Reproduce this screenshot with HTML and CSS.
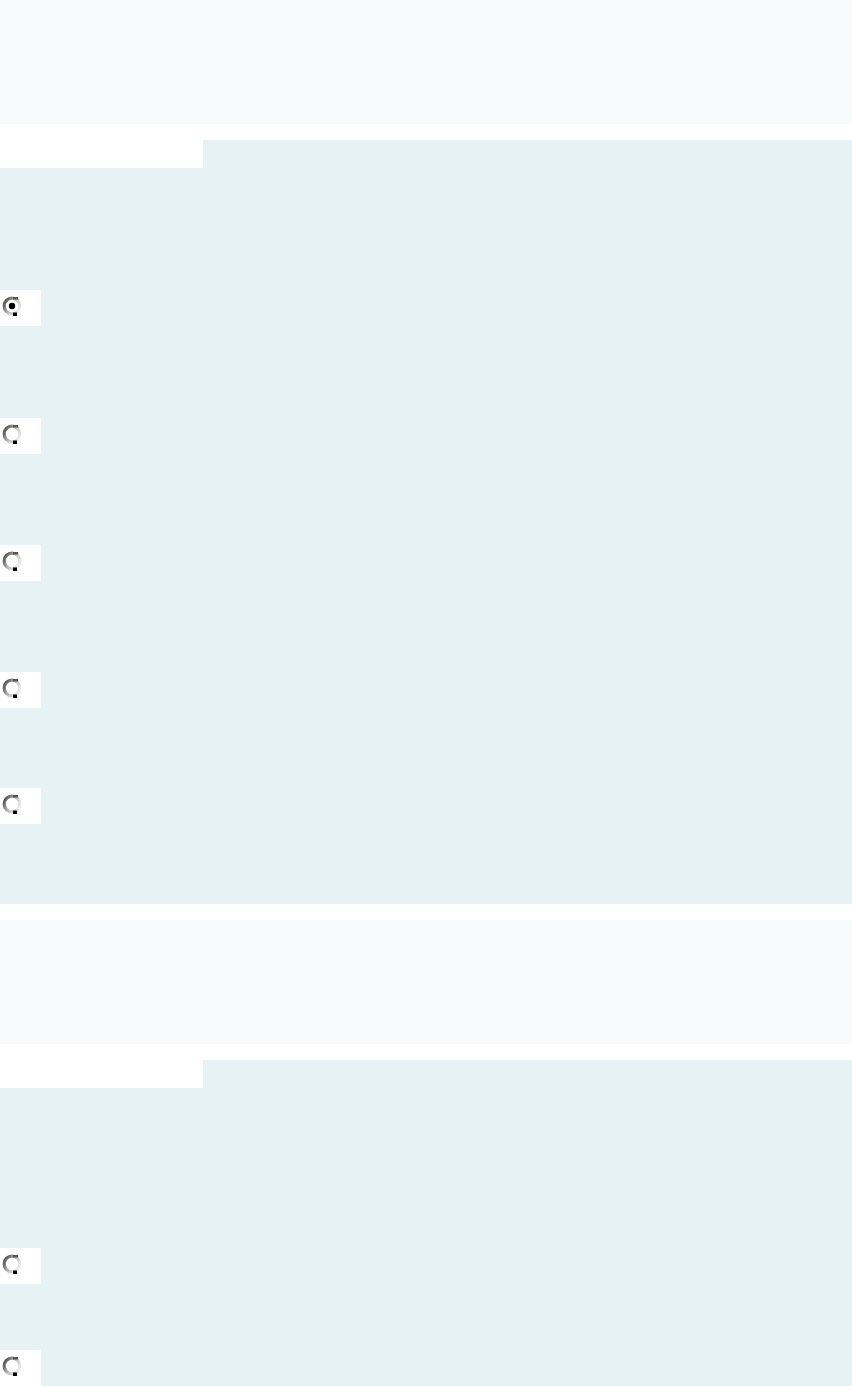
FILE: index.html
```html
<!DOCTYPE html>
<html lang="en">
<head>
    <title>Quiz</title>
    <link rel="stylesheet" href="styles.css">
</head>
<body>
    <svg class="defs" width="0" height="0">
        <defs>
            <linearGradient id="ring" x1="0" y1="0.2" x2="1" y2="0.8">
                <stop offset="0" stop-color="#4f4f4f"/>
                <stop offset="0.5" stop-color="#bdbdbd"/>
                <stop offset="1" stop-color="#f2f2f2"/>
            </linearGradient>
        </defs>
    </svg>

    <div class="question">
        <div class="q-head"></div>
        <div class="q-tabs">
            <div class="tab-blank"></div>
            <div class="tab-fill"></div>
        </div>
        <div class="q-options">
            <div class="option first">
                <label class="radio-box">
                    <svg class="radio" viewBox="0 0 20 20" width="20" height="20">
                        <circle cx="10" cy="10" r="7.8" fill="#fff" stroke="url(#ring)" stroke-width="3.2"/>
                        <rect x="11" y="1" width="5" height="2.5" fill="#555"/>
                        <rect x="11" y="16.5" width="4" height="3.5" fill="#000"/>
                        <circle cx="10" cy="10" r="3.2" fill="#000"/>
                    </svg>
                </label>
            </div>
            <div class="option gap-92">
                <label class="radio-box">
                    <svg class="radio" viewBox="0 0 20 20" width="20" height="20">
                        <circle cx="10" cy="10" r="7.8" fill="#fff" stroke="url(#ring)" stroke-width="3.2"/>
                        <rect x="11" y="1" width="5" height="2.5" fill="#555"/>
                        <rect x="11" y="16.5" width="4" height="3.5" fill="#000"/>
                    </svg>
                </label>
            </div>
            <div class="option gap-91">
                <label class="radio-box">
                    <svg class="radio" viewBox="0 0 20 20" width="20" height="20">
                        <circle cx="10" cy="10" r="7.8" fill="#fff" stroke="url(#ring)" stroke-width="3.2"/>
                        <rect x="11" y="1" width="5" height="2.5" fill="#555"/>
                        <rect x="11" y="16.5" width="4" height="3.5" fill="#000"/>
                    </svg>
                </label>
            </div>
            <div class="option gap-91">
                <label class="radio-box">
                    <svg class="radio" viewBox="0 0 20 20" width="20" height="20">
                        <circle cx="10" cy="10" r="7.8" fill="#fff" stroke="url(#ring)" stroke-width="3.2"/>
                        <rect x="11" y="1" width="5" height="2.5" fill="#555"/>
                        <rect x="11" y="16.5" width="4" height="3.5" fill="#000"/>
                    </svg>
                </label>
            </div>
            <div class="option gap-80">
                <label class="radio-box">
                    <svg class="radio" viewBox="0 0 20 20" width="20" height="20">
                        <circle cx="10" cy="10" r="7.8" fill="#fff" stroke="url(#ring)" stroke-width="3.2"/>
                        <rect x="11" y="1" width="5" height="2.5" fill="#555"/>
                        <rect x="11" y="16.5" width="4" height="3.5" fill="#000"/>
                    </svg>
                </label>
            </div>
        </div>
    </div>

    <div class="question">
        <div class="q-head"></div>
        <div class="q-tabs">
            <div class="tab-blank"></div>
            <div class="tab-fill"></div>
        </div>
        <div class="q-options">
            <div class="option first-tall">
                <label class="radio-box">
                    <svg class="radio" viewBox="0 0 20 20" width="20" height="20">
                        <circle cx="10" cy="10" r="7.8" fill="#fff" stroke="url(#ring)" stroke-width="3.2"/>
                        <rect x="11" y="1" width="5" height="2.5" fill="#555"/>
                        <rect x="11" y="16.5" width="4" height="3.5" fill="#000"/>
                    </svg>
                </label>
            </div>
            <div class="option gap-66">
                <label class="radio-box">
                    <svg class="radio" viewBox="0 0 20 20" width="20" height="20">
                        <circle cx="10" cy="10" r="7.8" fill="#fff" stroke="url(#ring)" stroke-width="3.2"/>
                        <rect x="11" y="1" width="5" height="2.5" fill="#555"/>
                        <rect x="11" y="16.5" width="4" height="3.5" fill="#000"/>
                    </svg>
                </label>
            </div>
        </div>
    </div>
</body>
</html>
```

FILE: styles.css
```css
body {
    margin: 0;
    background-color: #fff;
    font-family: "Liberation Sans", Arial, sans-serif;
}
.defs {
    position: absolute;
}
.question {
    margin-bottom: 16px;
}
.q-head {
    height: 124px;
    width: 851px;
    background-color: #f7f9fa;
}
.q-tabs {
    display: flex;
    height: 28px;
    margin-top: 16px;
}
.tab-blank {
    width: 203px;
    background-color: #fff;
}
.tab-fill {
    flex: 1;
    background-color: #e6f2f4;
}
.q-options {
    background-color: #e6f2f4;
    padding-bottom: 80px;
}
.option {
    display: flex;
}
.first {
    padding-top: 122px;
}
.first-tall {
    padding-top: 160px;
}
.gap-92 {
    padding-top: 92px;
}
.gap-91 {
    padding-top: 91px;
}
.gap-80 {
    padding-top: 80px;
}
.gap-66 {
    padding-top: 66px;
}
.radio-box {
    width: 41px;
    height: 36px;
    background-color: #fff;
    box-sizing: border-box;
    padding: 6px 0 0 2px;
}
.radio {
    display: block;
}
```
